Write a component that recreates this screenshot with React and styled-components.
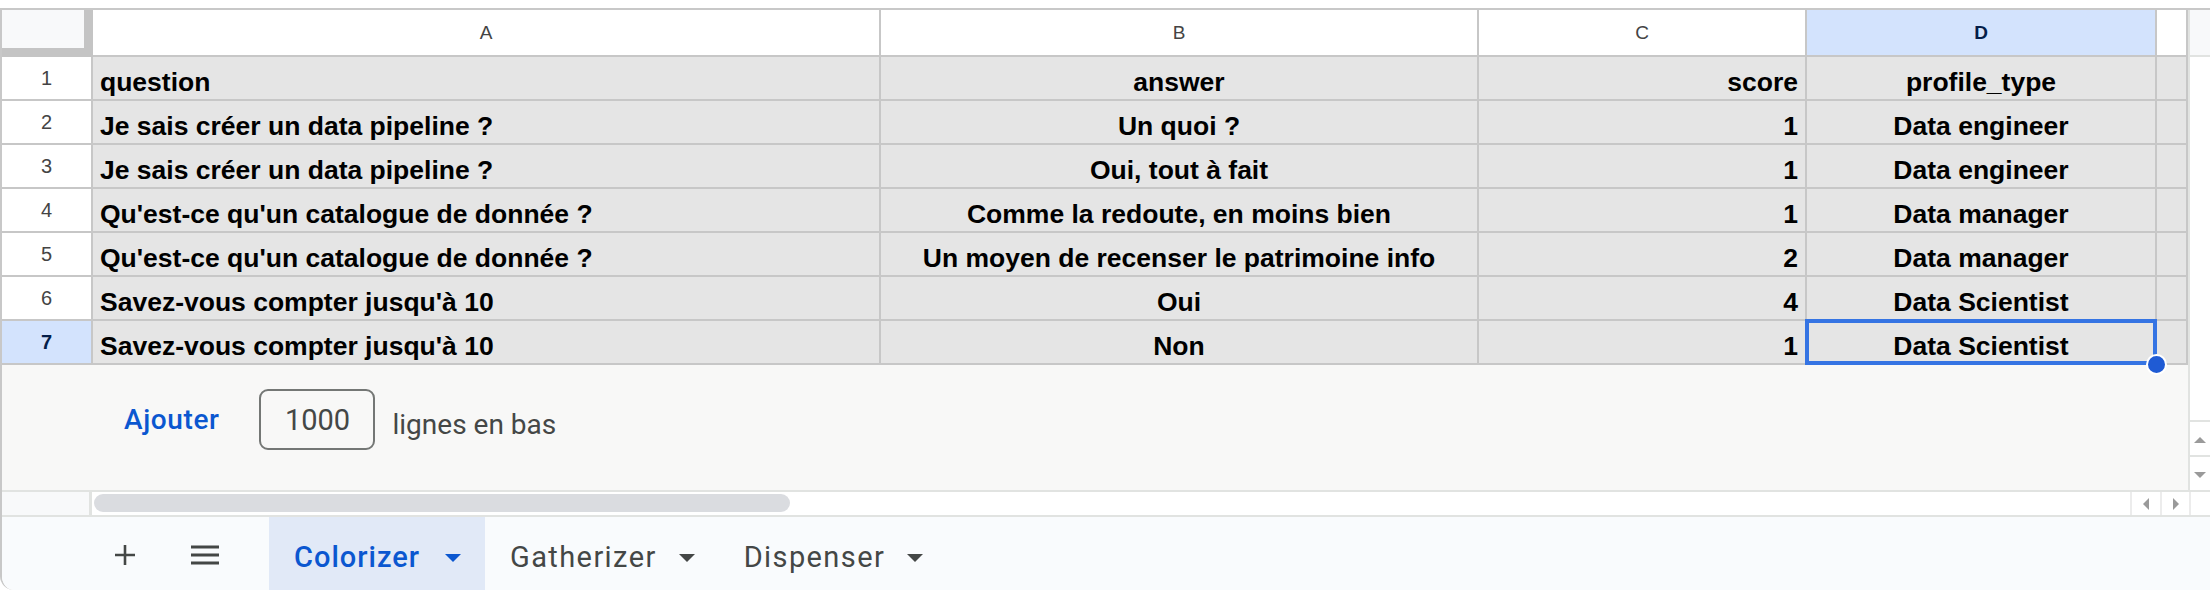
import React from 'react';
import styled, { createGlobalStyle, css } from 'styled-components';

const GlobalStyle = createGlobalStyle`
  html, body { margin: 0; padding: 0; background: #ffffff; }
  body { width: 2210px; height: 590px; overflow: hidden; }
  *, *::before, *::after { box-sizing: border-box; }
`;

const LINE = '#c7c7c7';
const SOFT = '#e1e3e1';

const Frame = styled.div`
  margin-top: 8px;
  height: 582px;
  border-top: 2px solid #c8c8c8;
  border-left: 2px solid #c8c8c8;
  border-bottom-left-radius: 14px;
  overflow: hidden;
  display: flex;
  flex-direction: column;
  background: #ffffff;
`;

const Body = styled.div`
  display: flex;
  height: 480px;
`;

const SheetArea = styled.div`
  flex: 1;
  display: flex;
  flex-direction: column;
  min-width: 0;
`;

const Grid = styled.div`
  display: grid;
  grid-template-columns: 91px 788px 598px 328px 350px 31px;
  grid-template-rows: 47px repeat(7, 44px);
`;

const Corner = styled.div`
  background: #f8f9fa;
  border-right: 9px solid #c4c4c4;
  border-bottom: 9px solid #c4c4c4;
`;

const ColHead = styled.div`
  background: ${p => (p.$active ? '#d3e3fd' : '#ffffff')};
  border-right: 2px solid ${LINE};
  border-bottom: 2px solid ${LINE};
  display: flex;
  align-items: center;
  justify-content: center;
  font-family: 'Liberation Sans', Arial, sans-serif;
  font-size: 19px;
  font-weight: ${p => (p.$active ? 700 : 400)};
  color: ${p => (p.$active ? '#041e49' : '#444444')};
`;

const RowHead = styled.div`
  background: ${p => (p.$active ? '#d3e3fd' : '#ffffff')};
  border-right: 2px solid ${LINE};
  border-bottom: 2px solid ${LINE};
  display: flex;
  align-items: center;
  justify-content: center;
  font-family: 'Liberation Sans', Arial, sans-serif;
  font-size: 20px;
  font-weight: ${p => (p.$active ? 700 : 400)};
  color: ${p => (p.$active ? '#041e49' : '#444444')};
`;

const Cell = styled.div`
  position: relative;
  background: #e5e5e5;
  border-right: 2px solid ${LINE};
  border-bottom: 2px solid ${LINE};
  display: flex;
  align-items: flex-end;
  justify-content: ${p =>
    p.$align === 'center' ? 'center' : p.$align === 'right' ? 'flex-end' : 'flex-start'};
  padding: 0 7px 2px 7px;
  font-family: 'Liberation Sans', Arial, sans-serif;
  font-weight: 700;
  font-size: 26.5px;
  line-height: 1.15;
  color: #000000;
  white-space: nowrap;
  overflow: visible;
  ${p =>
    p.$selected &&
    css`
      z-index: 3;
      &::after {
        content: '';
        position: absolute;
        top: -2px;
        left: -2px;
        right: -2px;
        bottom: -2px;
        border: 4px solid #3574e3;
        pointer-events: none;
      }
    `}
`;

const FillHandle = styled.span`
  position: absolute;
  right: -12px;
  bottom: -12px;
  width: 21px;
  height: 21px;
  border-radius: 50%;
  background: #1f5bd4;
  border: 2px solid #ffffff;
  z-index: 4;
`;

const AddRows = styled.div`
  flex: 1;
  background: #f8f8f7;
  display: flex;
  align-items: center;
  padding-left: 122px;
  padding-bottom: 16px;
  font-family: Roboto, 'Noto Sans', sans-serif;
`;

const AddButton = styled.span`
  font-size: 28px;
  font-weight: 500;
  letter-spacing: 0.6px;
  color: #0b57d0;
  margin-right: 40px;
`;

const CountBox = styled.div`
  width: 116px;
  height: 61px;
  border: 2px solid #747775;
  border-radius: 9px;
  display: flex;
  align-items: center;
  justify-content: center;
  font-size: 29px;
  color: #444746;
  margin-right: 17px;
`;

const AddLabel = styled.span`
  font-size: 28px;
  color: #444746;
  margin-top: 10px;
`;

const VScroll = styled.div`
  width: 22px;
  border-left: 2px solid ${SOFT};
  display: flex;
  flex-direction: column;
`;

const VCap = styled.div`
  height: 47px;
  background: #f8f9fa;
  border-bottom: 2px solid ${SOFT};
`;

const VTrack = styled.div`
  flex: 1;
  background: #ffffff;
`;

const ScrollBtn = styled.div`
  height: ${p => p.$h || 35}px;
  width: ${p => p.$w || 'auto'};
  background: #ffffff;
  border-top: ${p => (p.$vertical ? `2px solid ${SOFT}` : 'none')};
  border-left: ${p => (p.$vertical ? 'none' : `2px solid #ececec`)};
  display: flex;
  align-items: center;
  justify-content: center;
  padding-top: ${p => (p.$vertical ? 3 : 0)}px;
`;

const Arrow = styled.span`
  width: 0;
  height: 0;
  ${p =>
    p.$dir === 'up' &&
    css`
      border-left: 6px solid transparent;
      border-right: 6px solid transparent;
      border-bottom: 6px solid #9a9a9a;
    `}
  ${p =>
    p.$dir === 'down' &&
    css`
      border-left: 6px solid transparent;
      border-right: 6px solid transparent;
      border-top: 6px solid #9a9a9a;
    `}
  ${p =>
    p.$dir === 'left' &&
    css`
      border-top: 6px solid transparent;
      border-bottom: 6px solid transparent;
      border-right: 6px solid #9a9a9a;
    `}
  ${p =>
    p.$dir === 'right' &&
    css`
      border-top: 6px solid transparent;
      border-bottom: 6px solid transparent;
      border-left: 6px solid #9a9a9a;
    `}
`;

const HScroll = styled.div`
  height: 27px;
  border-top: 2px solid ${SOFT};
  border-bottom: 2px solid ${SOFT};
  display: flex;
  background: #ffffff;
`;

const HCorner = styled.div`
  width: 90px;
  background: #f8f9fa;
  border-right: 3px solid ${SOFT};
`;

const HTrack = styled.div`
  flex: 1;
  padding: 2px 0 0 2px;
`;

const Thumb = styled.div`
  width: 696px;
  height: 18px;
  border-radius: 9px;
  background: #dadce0;
`;

const HEnd = styled.div`
  width: 21px;
  border-left: 2px solid #ececec;
  background: #ffffff;
`;

const TabBar = styled.div`
  flex: 1;
  background: #f9fbfd;
  display: flex;
  align-items: stretch;
  padding-left: 101px;
  font-family: Roboto, 'Noto Sans', sans-serif;
`;

const IconButton = styled.div`
  width: 44px;
  display: flex;
  align-items: center;
  justify-content: center;
  padding-top: 3px;
  margin-right: ${p => p.$mr || 0}px;
  color: #444746;
`;

const Tab = styled.div`
  display: flex;
  align-items: center;
  gap: ${p => (p.$active ? 25 : 22)}px;
  padding: 6px 24px 0 25px;
  background: ${p => (p.$active ? '#e1e9f7' : 'transparent')};
  color: ${p => (p.$active ? '#0b57d0' : '#444746')};
  font-size: 29px;
  font-weight: ${p => (p.$active ? 500 : 400)};
  letter-spacing: ${p => (p.$active ? 1 : 1.4)}px;
`;

const Caret = styled.span`
  width: 0;
  height: 0;
  border-left: 8px solid transparent;
  border-right: 8px solid transparent;
  border-top: 8px solid currentColor;
  margin-top: 2px;
`;

const columns = ['A', 'B', 'C', 'D', ''];
const aligns = ['left', 'center', 'right', 'center', 'left'];

const rows = [
  ['question', 'answer', 'score', 'profile_type'],
  ['Je sais créer un data pipeline ?', 'Un quoi ?', '1', 'Data engineer'],
  ['Je sais créer un data pipeline ?', 'Oui, tout à fait', '1', 'Data engineer'],
  ["Qu'est-ce qu'un catalogue de donnée ?", 'Comme la redoute, en moins bien', '1', 'Data manager'],
  ["Qu'est-ce qu'un catalogue de donnée ?", 'Un moyen de recenser le patrimoine info', '2', 'Data manager'],
  ["Savez-vous compter jusqu'à 10", 'Oui', '4', 'Data Scientist'],
  ["Savez-vous compter jusqu'à 10", 'Non', '1', 'Data Scientist'],
];

const tabs = [
  { name: 'Colorizer', active: true },
  { name: 'Gatherizer' },
  { name: 'Dispenser' },
];

export default function App() {
  return (
    <>
      <GlobalStyle />
      <Frame>
        <Body>
          <SheetArea>
            <Grid>
              <Corner />
              {columns.map((c, i) => (
                <ColHead key={i} $active={c === 'D'}>
                  {c}
                </ColHead>
              ))}
              {rows.map((r, ri) => (
                <React.Fragment key={ri}>
                  <RowHead $active={ri === 6}>{ri + 1}</RowHead>
                  {[...r, ''].map((v, ci) => {
                    const selected = ri === 6 && ci === 3;
                    return (
                      <Cell key={ci} $align={aligns[ci]} $selected={selected}>
                        {v}
                        {selected && <FillHandle />}
                      </Cell>
                    );
                  })}
                </React.Fragment>
              ))}
            </Grid>
            <AddRows>
              <AddButton>Ajouter</AddButton>
              <CountBox>1000</CountBox>
              <AddLabel>lignes en bas</AddLabel>
            </AddRows>
          </SheetArea>
          <VScroll>
            <VCap />
            <VTrack />
            <ScrollBtn $vertical>
              <Arrow $dir="up" />
            </ScrollBtn>
            <ScrollBtn $vertical>
              <Arrow $dir="down" />
            </ScrollBtn>
          </VScroll>
        </Body>
        <HScroll>
          <HCorner />
          <HTrack>
            <Thumb />
          </HTrack>
          <ScrollBtn $h={23} $w="30px">
            <Arrow $dir="left" />
          </ScrollBtn>
          <ScrollBtn $h={23} $w="29px">
            <Arrow $dir="right" />
          </ScrollBtn>
          <HEnd />
        </HScroll>
        <TabBar>
          <IconButton $mr={36}>
            <svg width="22" height="22" viewBox="0 0 22 22">
              <path d="M11 1v20M1 11h20" stroke="currentColor" strokeWidth="2.6" fill="none" />
            </svg>
          </IconButton>
          <IconButton $mr={42}>
            <svg width="30" height="20" viewBox="0 0 30 20">
              <path d="M1 2h28M1 10h28M1 18h28" stroke="currentColor" strokeWidth="3" fill="none" />
            </svg>
          </IconButton>
          {tabs.map(t => (
            <Tab key={t.name} $active={t.active}>
              <span>{t.name}</span>
              <Caret />
            </Tab>
          ))}
        </TabBar>
      </Frame>
    </>
  );
}
